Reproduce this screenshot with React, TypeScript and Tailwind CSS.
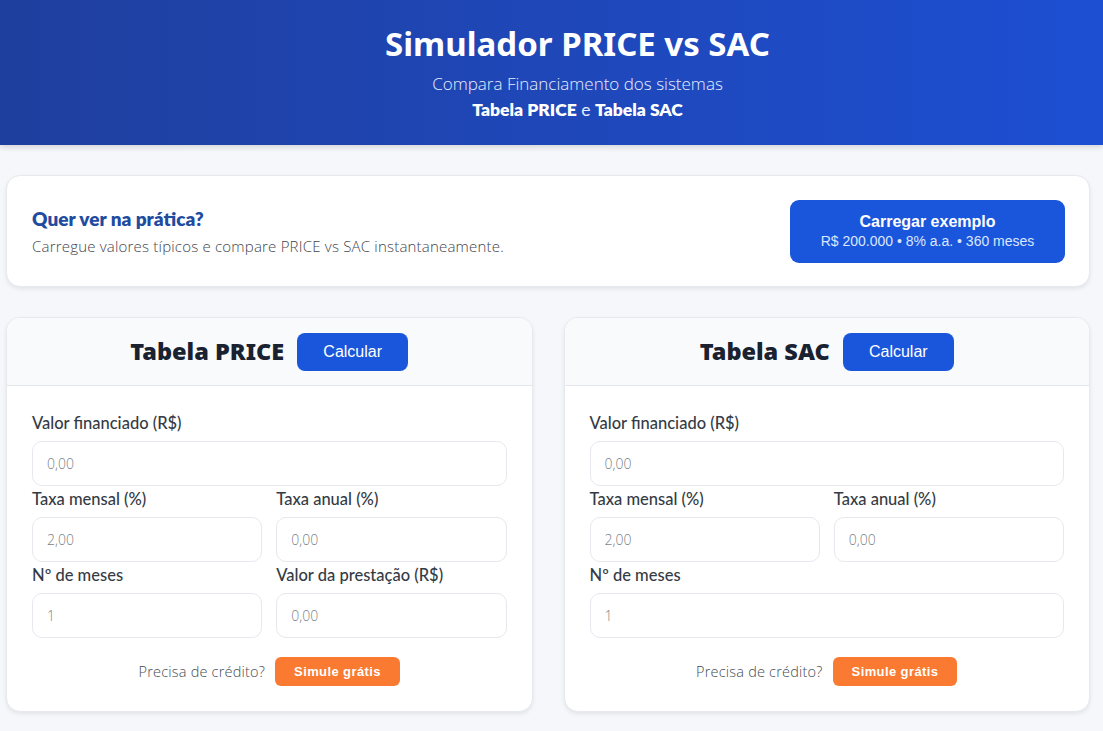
import React from "react";

type Field = { label: string; value: string; full?: boolean };

const priceFields: Field[] = [
  { label: "Valor financiado (R$)", value: "0,00", full: true },
  { label: "Taxa mensal (%)", value: "2,00" },
  { label: "Taxa anual (%)", value: "0,00" },
  { label: "Nº de meses", value: "1" },
  { label: "Valor da prestação (R$)", value: "0,00" },
];

const sacFields: Field[] = [
  { label: "Valor financiado (R$)", value: "0,00", full: true },
  { label: "Taxa mensal (%)", value: "2,00" },
  { label: "Taxa anual (%)", value: "0,00" },
  { label: "Nº de meses", value: "1", full: true },
];

function SimCard({ title, fields }: { title: string; fields: Field[] }) {
  return (
    <div className="bg-white rounded-[14px] border border-[#e6e9ee] shadow-[0_2px_4px_rgba(0,0,0,0.08)] overflow-hidden">
      <div className="h-[68px] bg-[#f8fafc] border-b border-[#e3e7ec] flex items-center justify-center gap-[13px]">
        <h2 className="font-['Noto_Sans',sans-serif] font-black text-[23.5px] text-[#1a2130]">{title}</h2>
        <button className="w-[111px] h-[38px] rounded-[8px] bg-[#1a56db] text-white text-[16px] font-['Liberation_Sans',Arial,sans-serif]">
          Calcular
        </button>
      </div>
      <div className="px-[25px] pt-[27px] pb-[25px]">
        <div className="grid grid-cols-2 gap-x-[14px] gap-y-[3px]">
          {fields.map((f) => (
            <div key={f.label} className={f.full ? "col-span-2" : ""}>
              <label className="block h-[20px] leading-[20px] mb-[8px] text-[16.5px] text-[#343b45] font-['Lato',sans-serif] font-medium">
                {f.label}
              </label>
              <input
                readOnly
                placeholder={f.value}
                className="w-full h-[45px] rounded-[10px] border border-[#e5e8ec] px-[14px] text-[14px] font-['Open_Sans',sans-serif] font-light placeholder:text-[#7a7f86] outline-none"
              />
            </div>
          ))}
        </div>
        <div className="mt-[19px] flex items-center justify-center gap-[10px]">
          <span className="text-[14.5px] tracking-[0.2px] text-[#454b53] font-['Open_Sans',sans-serif] font-light">Precisa de crédito?</span>
          <button className="h-[29px] px-[19px] rounded-[6px] bg-[#f97a30] text-white text-[13px] font-bold tracking-[0.4px] font-['Liberation_Sans',Arial,sans-serif]">
            Simule grátis
          </button>
        </div>
      </div>
    </div>
  );
}

export default function App() {
  return (
    <div className="min-h-screen w-full bg-[#f5f7fa] font-['Open_Sans',sans-serif]">
      <header className="h-[145px] bg-gradient-to-r from-[#1f3f9e] to-[#1d4fd3] shadow-[0_2px_6px_rgba(0,0,0,0.15)] flex flex-col items-center pt-[23px] pl-[52px] text-white">
        <h1 className="text-[33px] leading-[42px] font-bold font-['Noto_Sans',sans-serif]">Simulador PRICE vs SAC</h1>
        <p className="mt-[6px] text-[17px] leading-[26px] font-light text-[#e8edff]">Compara Financiamento dos sistemas</p>
        <p className="text-[17.5px] leading-[26px] text-[#e8edff] font-['Lato',sans-serif]">
          <b className="font-extrabold text-white">Tabela PRICE</b> e <b className="font-extrabold text-white">Tabela SAC</b>
        </p>
      </header>

      <main className="pl-[6px] pr-[13px] pt-[30px] pb-[20px]">
        <section className="h-[112px] bg-white rounded-[14px] border border-[#e6e9ee] shadow-[0_2px_4px_rgba(0,0,0,0.08)] flex items-center justify-between pl-[25px] pr-[24px]">
          <div>
            <h3 className="text-[19px] leading-[24px] font-extrabold text-[#1f4c9f] font-['Lato',sans-serif]">Quer ver na prática?</h3>
            <p className="mt-[5px] text-[15px] leading-[20px] tracking-[0.2px] font-light text-[#3f454d]">
              Carregue valores típicos e compare PRICE vs SAC instantaneamente.
            </p>
          </div>
          <button className="w-[275px] h-[63px] rounded-[9px] bg-[#1a56db] text-white flex flex-col items-center justify-center font-['Liberation_Sans',Arial,sans-serif]">
            <span className="text-[16px] leading-[20px] font-bold">Carregar exemplo</span>
            <span className="text-[14px] leading-[19px] text-[#dbe6ff]">R$ 200.000 • 8% a.a. • 360 meses</span>
          </button>
        </section>

        <div className="mt-[30px] grid grid-cols-2 gap-[31px]">
          <SimCard title="Tabela PRICE" fields={priceFields} />
          <SimCard title="Tabela SAC" fields={sacFields} />
        </div>
      </main>
    </div>
  );
}
